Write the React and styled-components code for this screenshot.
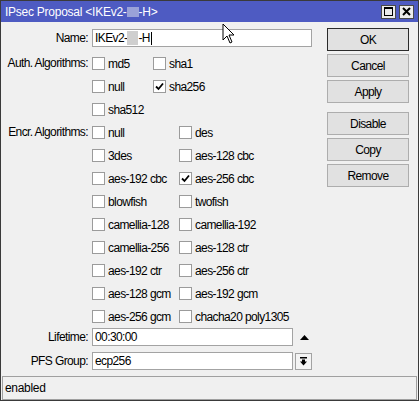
import React from 'react';
import styled, { createGlobalStyle } from 'styled-components';

const Global = createGlobalStyle`
  html, body { margin: 0; padding: 0; background: #f0f0f0; }
  body {
    font-family: "Liberation Sans", Arial, sans-serif;
    font-size: 12px;
    letter-spacing: -0.6px;
    color: #000;
  }
`;

const Window = styled.div`
  position: relative;
  width: 419px;
  height: 401px;
  box-sizing: border-box;
  border: 1px solid #3a3a3a;
  background: #f0f0f0;
  display: flex;
  flex-direction: column;
  overflow: hidden;
`;

const TitleBar = styled.div`
  height: 21px;
  flex: none;
  background: #4e5bc2;
  color: #fff;
  display: flex;
  align-items: center;
  justify-content: space-between;
  padding: 0 4px 0 4px;
`;

const TitleText = styled.span`
  display: flex;
  align-items: center;
  white-space: pre;
  letter-spacing: -0.25px;
`;

const Blur = styled.span`
  display: inline-block;
  width: ${p => p.$w || 12}px;
  height: ${p => p.$h || 11}px;
  background: ${p => p.$c || '#cfcfcf'};
`;

const TitleButtons = styled.div`
  display: flex;
  gap: 3px;
`;

const TitleButton = styled.div`
  width: 13px;
  height: 12px;
  background: #ececec;
  border: 1px solid #4a4a4a;
  display: flex;
  align-items: center;
  justify-content: center;
`;

const Body = styled.div`
  flex: 1;
  display: grid;
  grid-template-columns: 1fr 82px;
  column-gap: 14px;
  padding: 6px 9px 0 0;
`;

const Form = styled.div`
  display: flex;
  flex-direction: column;
`;

const Row = styled.div`
  display: grid;
  grid-template-columns: 87px 1fr;
  column-gap: 4px;
  align-items: ${p => (p.$top ? 'start' : 'center')};
  margin-top: ${p => p.$mt || 0}px;
`;

const Label = styled.div`
  text-align: right;
  white-space: nowrap;
  line-height: ${p => (p.$lh ? p.$lh + 'px' : 'normal')};
`;

const Field = styled.div`
  display: flex;
  align-items: center;
`;

const Input = styled.div`
  box-sizing: border-box;
  width: ${p => p.$w}px;
  height: 18px;
  border: 1px solid #a3a3a3;
  background: #fff;
  padding-left: 2px;
  display: flex;
  align-items: center;
  white-space: pre;
`;

const Caret = styled.span`
  display: inline-block;
  width: 1px;
  height: 13px;
  background: #000;
  margin-left: 1px;
`;

const CheckGrid = styled.div`
  display: grid;
  grid-template-columns: ${p => p.$col}px auto;
  grid-auto-rows: 23px;
`;

const CheckItem = styled.div`
  display: flex;
  align-items: center;
  gap: 3px;
  white-space: nowrap;
`;

const Box = styled.span`
  box-sizing: border-box;
  width: 13px;
  height: 13px;
  border: 1px solid #9b9b9b;
  background: #fff;
  display: flex;
  align-items: center;
  justify-content: center;
  flex: none;
`;

const Spin = styled.div`
  margin-left: 7px;
  width: 9px;
  display: flex;
  justify-content: center;
`;

const DropButton = styled.div`
  box-sizing: border-box;
  margin-left: 2px;
  width: 17px;
  height: 17px;
  border: 1px solid #a3a3a3;
  background: #f4f4f4;
  display: flex;
  align-items: center;
  justify-content: center;
`;

const Buttons = styled.div`
  display: flex;
  flex-direction: column;
  gap: 3px;
`;

const Button = styled.div`
  box-sizing: border-box;
  height: 23px;
  background: #e1e1e1;
  border: 1px solid ${p => (p.$default ? '#2b2b2b' : '#adadad')};
  display: flex;
  align-items: center;
  justify-content: center;
  margin-top: ${p => p.$mt || 0}px;
`;

const StatusBar = styled.div`
  flex: none;
  box-sizing: border-box;
  height: 24px;
  margin: 0 1px;
  border: 1px solid #a0a0a0;
  display: flex;
  align-items: center;
  padding-left: 2px;
  letter-spacing: -0.3px;
`;

const Cursor = styled.svg`
  position: absolute;
  left: 221px;
  top: 22px;
`;

const Check = ({ label, checked }) => (
  <CheckItem>
    <Box>
      {checked && (
        <svg width="9" height="9" viewBox="0 0 9 9">
          <path d="M1 4.5 L3.5 7 L8 1.5" fill="none" stroke="#000" strokeWidth="1.8" />
        </svg>
      )}
    </Box>
    {label}
  </CheckItem>
);

const auth = [['md5'], ['sha1'], ['null'], ['sha256', true], ['sha512']];
const encr = [
  ['null'], ['des'], ['3des'], ['aes-128 cbc'], ['aes-192 cbc'], ['aes-256 cbc', true],
  ['blowfish'], ['twofish'], ['camellia-128'], ['camellia-192'], ['camellia-256'], ['aes-128 ctr'],
  ['aes-192 ctr'], ['aes-256 ctr'], ['aes-128 gcm'], ['aes-192 gcm'], ['aes-256 gcm'], ['chacha20 poly1305'],
];

export default function App() {
  return (
    <Window>
      <Global />
      <TitleBar>
        <TitleText>
          IPsec Proposal &lt;IKEv2-<Blur $c="#9aa2d8" $w={12} $h={10} />-H&gt;
        </TitleText>
        <TitleButtons>
          <TitleButton>
            <svg width="9" height="9" viewBox="0 0 9 9">
              <rect x="0.5" y="0.5" width="8" height="8" fill="none" stroke="#000" />
              <rect x="0" y="0" width="9" height="2" fill="#000" />
            </svg>
          </TitleButton>
          <TitleButton>
            <svg width="9" height="9" viewBox="0 0 9 9">
              <path d="M1 1 L8 8 M8 1 L1 8" stroke="#000" strokeWidth="2" />
            </svg>
          </TitleButton>
        </TitleButtons>
      </TitleBar>
      <Body>
        <Form>
          <Row $mt={1}>
            <Label>Name:</Label>
            <Field>
              <Input $w={220}>
                IKEv2-<Blur $w={11} $h={14} />-H<Caret />
              </Input>
            </Field>
          </Row>
          <Row $top $mt={5}>
            <Label $lh={23}>Auth. Algorithms:</Label>
            <CheckGrid $col={61}>
              {auth.map(([l, c]) => <Check key={l} label={l} checked={c} />)}
            </CheckGrid>
          </Row>
          <Row $top>
            <Label $lh={23}>Encr. Algorithms:</Label>
            <CheckGrid $col={87}>
              {encr.map(([l, c]) => <Check key={l} label={l} checked={c} />)}
            </CheckGrid>
          </Row>
          <Row>
            <Label>Lifetime:</Label>
            <Field>
              <Input $w={201}>00:30:00</Input>
              <Spin>
                <svg width="9" height="5" viewBox="0 0 9 5">
                  <path d="M0 5 L4.5 0 L9 5 Z" fill="#000" />
                </svg>
              </Spin>
            </Field>
          </Row>
          <Row $mt={6}>
            <Label>PFS Group:</Label>
            <Field>
              <Input $w={201}>ecp256</Input>
              <DropButton>
                <svg width="9" height="9" viewBox="0 0 9 9">
                  <rect x="1" y="0" width="7" height="1.5" fill="#000" />
                  <rect x="3" y="2.5" width="3" height="2.5" fill="#000" />
                  <path d="M1 4.5 L8 4.5 L4.5 8.5 Z" fill="#000" />
                </svg>
              </DropButton>
            </Field>
          </Row>
        </Form>
        <Buttons>
          <Button $default>OK</Button>
          <Button>Cancel</Button>
          <Button>Apply</Button>
          <Button $mt={6}>Disable</Button>
          <Button>Copy</Button>
          <Button>Remove</Button>
        </Buttons>
      </Body>
      <StatusBar>enabled</StatusBar>
      <Cursor width="13" height="21" viewBox="0 0 13 21">
        <path d="M1 1 L1 17 L5 13 L8 20 L10 19 L7 12 L12 12 Z" fill="#fff" stroke="#000" strokeWidth="1" strokeLinejoin="miter" />
      </Cursor>
    </Window>
  );
}
